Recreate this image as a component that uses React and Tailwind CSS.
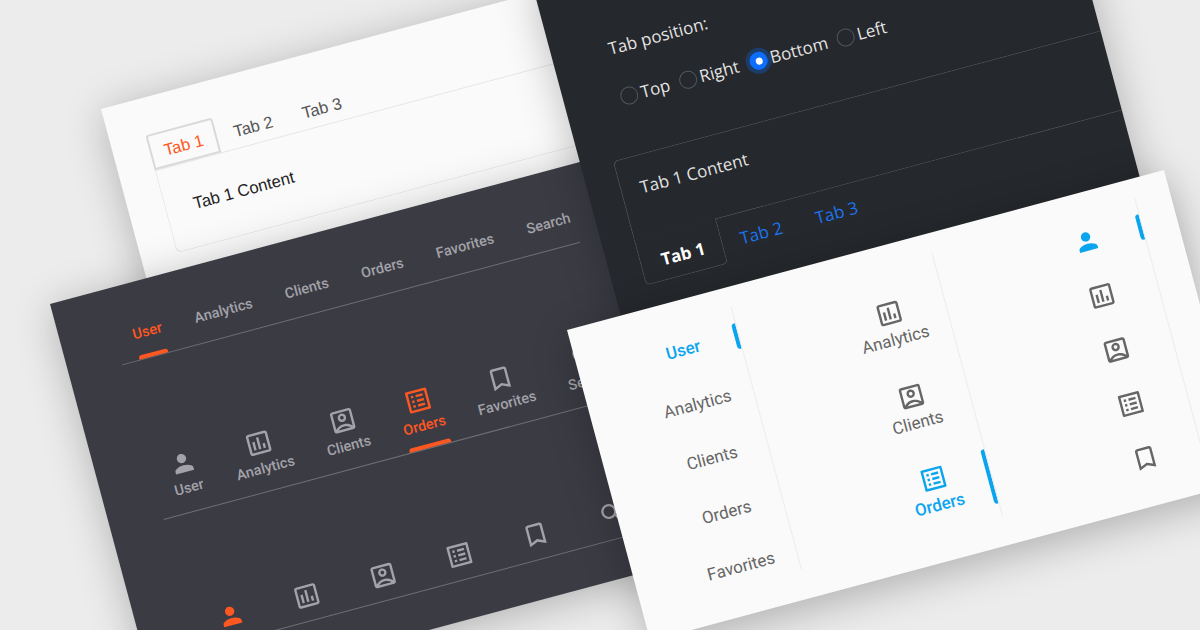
import {
  MdPerson,
  MdOutlineAssessment,
  MdOutlineAccountBox,
  MdOutlineListAlt,
  MdOutlineBookmarkBorder,
  MdSearch,
} from "react-icons/md";

const items = [
  { label: "User", Icon: MdPerson, size: 28 },
  { label: "Analytics", Icon: MdOutlineAssessment, size: 29 },
  { label: "Clients", Icon: MdOutlineAccountBox, size: 29 },
  { label: "Orders", Icon: MdOutlineListAlt, size: 29 },
  { label: "Favorites", Icon: MdOutlineBookmarkBorder, size: 29 },
  { label: "Search", Icon: MdSearch, size: 28 },
];

function LightTabsCard() {
  return (
    <div className="absolute left-[101px] top-[109px] z-10 h-[240px] w-[520px] origin-top-left rotate-[-15deg] bg-[#fafafa] pl-[36px] pt-[37px] font-['Liberation_Sans',sans-serif] text-[16.5px] shadow-[0_6px_40px_rgba(0,0,0,0.25)]">
      <div className="flex h-[37px] items-stretch border-b border-[#e6e6e6]">
        <div className="flex w-[69px] items-center justify-center rounded-t-[3px] border-2 border-[#d9d9d9] pt-[2px] text-[#ff5722]">
          Tab 1
        </div>
        <div className="flex w-[70px] items-center justify-center pl-[5px] pt-[3px] text-[#555555]">Tab 2</div>
        <div className="flex w-[70px] items-center justify-center pl-[7px] pt-[3px] text-[#555555]">Tab 3</div>
      </div>
      <div className="flex h-[85px] items-center rounded-bl-[6px] border-b border-l border-[#e6e6e6] pl-[28px] text-[16.7px] text-[#222222]">
        Tab 1 Content
      </div>
    </div>
  );
}

function Radio({ label, checked, className }) {
  return (
    <div className={`flex items-center gap-[3px] ${className}`}>
      {checked ? (
        <span className="flex h-[18px] w-[18px] shrink-0 items-center justify-center rounded-full bg-[#0d6efd] shadow-[0_0_0_4px_rgba(13,110,253,0.3)]">
          <span className="h-[7px] w-[7px] rounded-full bg-white" />
        </span>
      ) : (
        <span className="h-[18px] w-[18px] shrink-0 rounded-full border border-[#54575b]" />
      )}
      <span>{label}</span>
    </div>
  );
}

function DarkTabsCard() {
  return (
    <div className="absolute left-[530.6px] top-[-20px] z-30 h-[450px] w-[537px] origin-top-left rotate-[-15deg] overflow-hidden bg-[#25282c] pt-[75px] font-['Open_Sans',sans-serif] text-[17px] text-[#e4e4e4] shadow-[0_6px_40px_rgba(0,0,0,0.25)]">
      <div className="pl-[57px] leading-[24px]">Tab position:</div>
      <div className="mt-[26px] flex h-[24px] pl-[56px] leading-[24px]">
        <Radio label="Top" className="w-[61px] shrink-0" />
        <Radio label="Right" className="w-[73px] shrink-0" />
        <Radio label="Bottom" checked className="w-[90px] shrink-0" />
        <Radio label="Left" />
      </div>
      <div className="ml-[32px] mt-[47px]">
        <div className="flex h-[83px] items-center rounded-tl-[6px] border-b border-l border-t border-[#4b4e52] pb-[17px] pl-[19px]">
          Tab 1 Content
        </div>
        <div className="flex h-[46px]">
          <div className="-mt-px flex w-[85px] items-center justify-center rounded-b-[5px] border-b border-l border-r border-[#4b4e52] bg-[#25282c] pl-[3px] pt-[6px] font-bold text-white">
            Tab 1
          </div>
          <div className="flex w-[80px] items-center justify-center pt-[4px] text-[#1c74f0]">Tab 2</div>
          <div className="flex w-[76px] items-center justify-center pt-[4px] text-[#1c74f0]">Tab 3</div>
        </div>
      </div>
    </div>
  );
}

function DarkNavCard() {
  return (
    <div className="absolute left-[50px] top-[304px] z-20 h-[413px] w-[620px] origin-top-left rotate-[-15deg] overflow-hidden bg-[#3b3b44] pl-[54px] pt-[22px] font-['Roboto',sans-serif] text-[14.5px] font-medium text-[#a2a2a8] shadow-[0_6px_40px_rgba(0,0,0,0.25)]">
      <div className="flex h-[56px] w-[474px] border-b border-[#6f6f75] pl-[1px]">
        {items.map((it, i) => (
          <div key={it.label} className={`flex h-full items-center px-[17px] ${i === 0 ? "text-[#ff5722]" : ""}`}>
            <span className="relative flex h-full items-center pt-[5px]">
              {it.label}
              {i === 0 && <span className="absolute bottom-0 left-0 h-[4px] w-full rounded-t-[3px] bg-[#ff5722]" />}
            </span>
          </div>
        ))}
      </div>

      <div className="mt-[80px] flex h-[80px] w-[474px] border-b border-[#6f6f75] pl-[1px]">
        {items.map((it, i) => (
          <div
            key={it.label}
            className={`flex h-full flex-col items-center px-[17px] pt-[16px] ${i === 3 ? "text-[#ff5722]" : ""}`}
          >
            <span className="relative flex h-full flex-col items-center">
              <it.Icon size={it.size} />
              <span className="leading-[23px]">{it.label}</span>
              {i === 3 && <span className="absolute bottom-0 left-0 h-[4px] w-full rounded-t-[3px] bg-[#ff5722]" />}
            </span>
          </div>
        ))}
      </div>

      <div className="mt-[80px] flex h-[56px] w-[474px] border-b border-[#6f6f75]">
        {items.map((it, i) => (
          <div
            key={it.label}
            className={`flex h-full w-[79px] shrink-0 justify-center pt-[16px] ${i === 0 ? "text-[#ff5722]" : ""}`}
          >
            <it.Icon size={it.size} />
          </div>
        ))}
      </div>
    </div>
  );
}

function SideBar({ h }) {
  return (
    <span className={`absolute right-0 top-1/2 w-[4px] -translate-y-1/2 rounded-l-[3px] bg-[#0aa5ee] ${h}`} />
  );
}

function SideNavCard() {
  return (
    <div className="absolute left-[566.5px] top-[330px] z-40 flex h-[322px] w-[618px] origin-top-left rotate-[-15deg] items-start bg-[#fafafa] pt-[20px] font-['Roboto',sans-serif] text-[17px] text-[#666666] shadow-[0_10px_40px_rgba(0,0,0,0.25)]">
      <div className="flex h-[272px] w-[165px] flex-col items-end overflow-hidden border-r border-[#ececec] pt-[2px]">
        {items.slice(0, 5).map((it, i) => (
          <div
            key={it.label}
            className={`relative flex h-[56px] w-[114px] shrink-0 items-center justify-center ${i === 0 ? "font-medium text-[#0aa5ee]" : ""}`}
          >
            {it.label}
            {i === 0 && <SideBar h="h-[26px]" />}
          </div>
        ))}
      </div>

      <div className="flex h-[272px] w-[208px] flex-col items-end overflow-hidden border-r border-[#ececec] pt-[17px]">
        {items.slice(1, 4).map((it, i) => (
          <div
            key={it.label}
            className={`relative flex h-[85.5px] w-[114px] shrink-0 flex-col items-center justify-center ${i === 2 ? "font-medium text-[#0aa5ee]" : ""}`}
          >
            <it.Icon size={it.size} />
            <span className="leading-[24px]">{it.label}</span>
            {i === 2 && <SideBar h="h-[56px]" />}
          </div>
        ))}
      </div>

      <div className="flex h-[272px] w-[210px] flex-col items-end overflow-hidden border-r border-[#ececec] pt-[1px]">
        {items.slice(0, 5).map((it, i) => (
          <div
            key={it.label}
            className={`relative flex h-[56px] w-[114px] shrink-0 items-center justify-center ${i === 0 ? "text-[#0aa5ee]" : ""}`}
          >
            <it.Icon size={it.size} />
            {i === 0 && <SideBar h="h-[26px]" />}
          </div>
        ))}
      </div>
    </div>
  );
}

export default function App() {
  return (
    <div className="relative h-[630px] w-[1200px] overflow-hidden bg-[#ececec]">
      <LightTabsCard />
      <DarkNavCard />
      <DarkTabsCard />
      <SideNavCard />
    </div>
  );
}
